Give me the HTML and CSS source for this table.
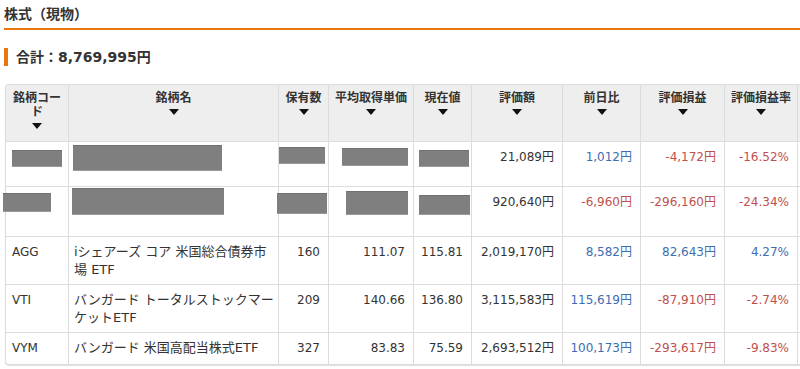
FILE: index.html
```html
<!DOCTYPE html>
<html lang="ja">
<head>
<meta charset="utf-8">
<title>株式（現物）</title>
<link rel="stylesheet" href="styles.css">
</head>
<body>
<div class="page">
  <h2 class="title">株式（現物）</h2>
  <div class="total">合計：8,769,995円</div>
  <div class="table-wrap">
    <table class="holdings">
      <colgroup>
        <col class="c-code"><col class="c-name"><col class="c-qty"><col class="c-avg"><col class="c-price"><col class="c-val"><col class="c-day"><col class="c-pl"><col class="c-rate"><col class="c-extra">
      </colgroup>
      <thead>
        <tr>
          <th class="first">銘柄コード<span class="sort"></span></th>
          <th>銘柄名<span class="sort"></span></th>
          <th>保有数<span class="sort"></span></th>
          <th>平均取得単価<span class="sort"></span></th>
          <th>現在値<span class="sort"></span></th>
          <th>評価額<span class="sort"></span></th>
          <th>前日比<span class="sort"></span></th>
          <th>評価損益<span class="sort"></span></th>
          <th>評価損益率<span class="sort"></span></th>
          <th></th>
        </tr>
      </thead>
      <tbody>
        <tr class="row-r1">
          <td class="first"><div class="redact r1-code"></div></td>
          <td><div class="redact r1-name"></div></td>
          <td><div class="redact r1-qty"></div></td>
          <td><div class="redact r1-avg"></div></td>
          <td><div class="redact r1-price"></div></td>
          <td class="num">21,089円</td>
          <td class="num up">1,012円</td>
          <td class="num down">-4,172円</td>
          <td class="num down">-16.52%</td>
          <td></td>
        </tr>
        <tr class="row-r2">
          <td class="first"><div class="redact r2-code"></div></td>
          <td><div class="redact r2-name"></div></td>
          <td><div class="redact r2-qty"></div></td>
          <td><div class="redact r2-avg"></div></td>
          <td><div class="redact r2-price"></div></td>
          <td class="num">920,640円</td>
          <td class="num down">-6,960円</td>
          <td class="num down">-296,160円</td>
          <td class="num down">-24.34%</td>
          <td></td>
        </tr>
        <tr>
          <td class="first code">AGG</td>
          <td class="name">iシェアーズ コア 米国総合債券市場 ETF</td>
          <td class="num">160</td>
          <td class="num">111.07</td>
          <td class="num">115.81</td>
          <td class="num">2,019,170円</td>
          <td class="num up">8,582円</td>
          <td class="num up">82,643円</td>
          <td class="num up">4.27%</td>
          <td></td>
        </tr>
        <tr>
          <td class="first code">VTI</td>
          <td class="name">バンガード トータルストックマーケットETF</td>
          <td class="num">209</td>
          <td class="num">140.66</td>
          <td class="num">136.80</td>
          <td class="num">3,115,583円</td>
          <td class="num up">115,619円</td>
          <td class="num down">-87,910円</td>
          <td class="num down">-2.74%</td>
          <td></td>
        </tr>
        <tr class="row-last">
          <td class="first code">VYM</td>
          <td class="name">バンガード 米国高配当株式ETF</td>
          <td class="num">327</td>
          <td class="num">83.83</td>
          <td class="num">75.59</td>
          <td class="num">2,693,512円</td>
          <td class="num up">100,173円</td>
          <td class="num down">-293,617円</td>
          <td class="num down">-9.83%</td>
          <td></td>
        </tr>
      </tbody>
    </table>
  </div>
</div>
</body>
</html>
```
FILE: styles.css
```css
html, body {
  margin: 0;
  padding: 0;
  background: #fff;
  overflow: hidden;
}
body {
  font-family: "DejaVu Sans", "Noto Sans CJK JP", sans-serif;
  color: #333;
  width: 800px;
  height: 369px;
}
.page {
  padding: 0 0 0 4px;
}
.title {
  margin: 0;
  padding: 4px 0 4px 0;
  font-size: 14px;
  line-height: 20px;
  font-weight: bold;
  color: #333;
  border-bottom: 2px solid #e8780c;
}
.total {
  margin: 18px 0 0 0;
  border-left: 4px solid #e8780c;
  padding-left: 8px;
  font-size: 14px;
  line-height: 18px;
  font-weight: bold;
  color: #333;
}
.table-wrap {
  margin: 18px 0 0 1px;
  width: 794px;
  border: 1px solid #dcdcdc;
  border-right: none;
  border-radius: 4px 0 0 4px;
  box-shadow: 0 1px 1px rgba(0, 0, 0, 0.12);
}
.holdings {
  width: 794px;
  table-layout: fixed;
  border-collapse: separate;
  border-spacing: 0;
  font-size: 12px;
  line-height: 18px;
}
.c-code { width: 62px; }
.c-name { width: 210px; }
.c-qty { width: 50px; }
.c-avg { width: 85px; }
.c-price { width: 58px; }
.c-val { width: 91px; }
.c-day { width: 78px; }
.c-pl { width: 84px; }
.c-rate { width: 73px; }
.c-extra { width: 3px; }

.holdings th {
  background: #eeeeee;
  font-weight: bold;
  font-size: 12px;
  line-height: 14px;
  color: #333;
  text-align: center;
  vertical-align: top;
  padding: 6px 4px 0 4px;
  height: 50px;
  border-left: 1px solid #dcdcdc;
}
.holdings th.first {
  border-left: none;
  border-top-left-radius: 3px;
}
.sort {
  display: block;
  width: 0;
  height: 0;
  margin: 4px auto 4px auto;
  border-left: 5px solid transparent;
  border-right: 5px solid transparent;
  border-top: 6px solid #111;
}
.holdings td {
  border-left: 1px solid #dcdcdc;
  border-top: 1px solid #dcdcdc;
  vertical-align: top;
  padding: 6px 8px 5px 6px;
}
.holdings td.first {
  border-left: none;
}
.holdings td.name {
  font-size: 13px;
  padding: 6px 4px 5px 5px;
}
.holdings td.num {
  text-align: right;
  padding-right: 8px;
}
.holdings th:last-child,
.holdings td:last-child {
  padding: 0;
}
.up { color: #3d6db2; }
.down { color: #c0504d; }

.row-last td {
  padding-bottom: 7px;
}
.row-last td.first {
  border-bottom-left-radius: 3px;
}

/* redacted cells */
.row-r1 td, .row-r2 td {
  padding-left: 0;
}
.row-r1 td { height: 33px; }
.row-r2 td { height: 38px; }
.redact {
  background: #7f7f7f;
  border-top: 1px solid #707070;
  border-bottom: 1px solid #9a9a9a;
  box-sizing: border-box;
}
.row-r1 .redact, .row-r2 .redact { margin-bottom: -40px; }
.r1-code { width: 50px; height: 17px; margin-left: 6px; margin-top: 2px; }
.r1-name { width: 149px; height: 26px; margin-left: 4px; margin-top: -3px; }
.r1-qty { width: 46px; height: 17px; margin-left: 0; margin-top: -1px; }
.r1-avg { width: 66px; height: 18px; margin-left: 13px; margin-top: 0; }
.r1-price { width: 50px; height: 17px; margin-left: 5px; margin-top: 2px; }
.r2-code { width: 48px; height: 19px; margin-left: -3px; margin-top: 0; }
.r2-name { width: 152px; height: 27px; margin-left: 3px; margin-top: -5px; }
.r2-qty { width: 50px; height: 21px; margin-left: -2px; margin-top: 0; }
.r2-avg { width: 62px; height: 24px; margin-left: 17px; margin-top: -2px; }
.r2-price { width: 51px; height: 20px; margin-left: 5px; margin-top: 2px; }
```
